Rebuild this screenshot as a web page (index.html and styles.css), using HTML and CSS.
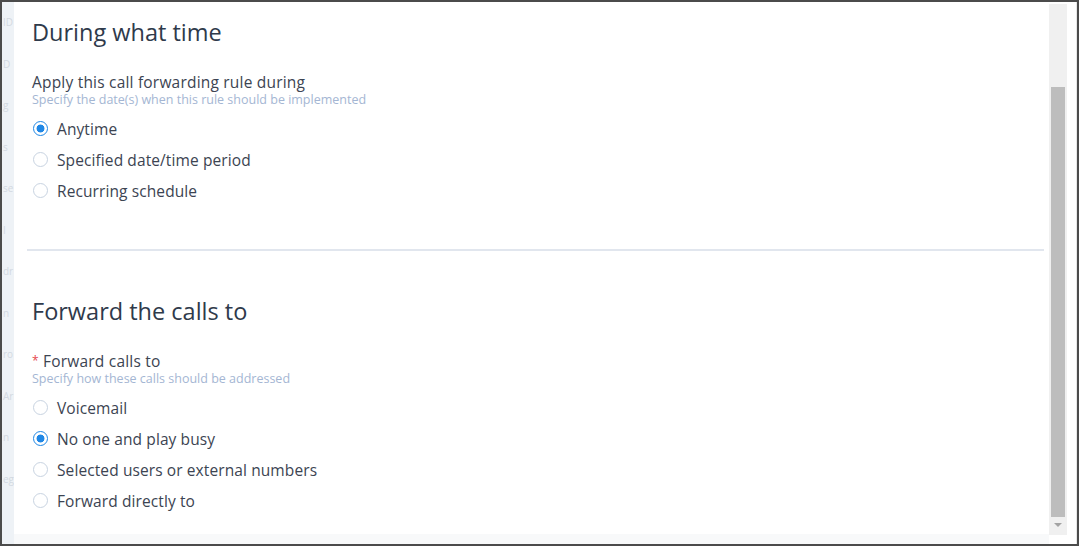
FILE: index.html
```html
<!DOCTYPE html>
<html lang="en">
<head>
    <meta charset="UTF-8">
    <meta name="viewport" content="width=device-width, initial-scale=1.0">
    <title>Call forwarding rule</title>
    <link rel="stylesheet" href="styles.css">
</head>
<body>

    <div class="frame">
        <div class="backdrop">
            <div>ID</div>
            <div>D</div>
            <div>g</div>
            <div>s</div>
            <div>se</div>
            <div>I</div>
            <div>dr</div>
            <div>n</div>
            <div>ro</div>
            <div>Ar</div>
            <div>n</div>
            <div>eg</div>
        </div>

        <div class="dialog">
            <section class="rule-section">
                <h2>During what time</h2>
                <div class="field-label">Apply this call forwarding rule during</div>
                <div class="field-hint">Specify the date(s) when this rule should be implemented</div>
                <div class="radio-group">
                    <label class="radio"><span class="dot checked"></span>Anytime</label>
                    <label class="radio"><span class="dot"></span>Specified date/time period</label>
                    <label class="radio"><span class="dot"></span>Recurring schedule</label>
                </div>
            </section>

            <hr class="divider">

            <section class="rule-section">
                <h2>Forward the calls to</h2>
                <div class="field-label"><span class="required">*</span> Forward calls to</div>
                <div class="field-hint">Specify how these calls should be addressed</div>
                <div class="radio-group">
                    <label class="radio"><span class="dot"></span>Voicemail</label>
                    <label class="radio"><span class="dot checked"></span>No one and play busy</label>
                    <label class="radio"><span class="dot"></span>Selected users or external numbers</label>
                    <label class="radio"><span class="dot"></span>Forward directly to</label>
                </div>
            </section>
        </div>

        <div class="scrollbar">
            <div class="scroll-thumb"></div>
            <div class="scroll-arrow"></div>
        </div>

        <div class="edge"></div>
    </div>

</body>
</html>
```

FILE: styles.css
```css
body {
    margin: 0;
    font-family: 'Open Sans', 'Liberation Sans', sans-serif;
    background-color: #fff;
    color: #3c4452;
}

.frame {
    width: 1079px;
    height: 546px;
    box-sizing: border-box;
    border: 2px solid #4b4b4b;
    display: flex;
    overflow: hidden;
    background-color: #fff;
}

/* page behind the dialog, only a sliver shows */
.backdrop {
    width: 12px;
    flex-shrink: 0;
    box-sizing: border-box;
    padding: 0 0 0 1px;
    background-color: #eef2f6;
    overflow: hidden;
    font-size: 10px;
    line-height: 41.5px;
    color: #d3d9e1;
    white-space: nowrap;
}

.dialog {
    flex: 1;
    padding: 14px 5px 0 18px;
    border-bottom: 10px solid #f8f9fa;
}

h2 {
    margin: 0;
    font-size: 23.5px;
    font-weight: 400;
    line-height: 32px;
    color: #2f3a4b;
}

.field-label {
    margin-top: 25px;
    font-size: 15.5px;
    letter-spacing: 0.2px;
    line-height: 18px;
    color: #3c4452;
}

.required {
    color: #e5484d;
    font-size: 12px;
    vertical-align: 2px;
}

.field-hint {
    font-size: 12.5px;
    line-height: 17px;
    color: #a4b6d3;
}

.radio-group {
    margin-top: 5px;
}

.radio {
    display: flex;
    align-items: center;
    height: 31px;
    font-size: 15.5px;
    letter-spacing: 0.1px;
    color: #3c4452;
}

.dot {
    width: 13px;
    height: 13px;
    border: 1px solid #c8d3e1;
    border-radius: 50%;
    margin: 0 9px 0 1px;
    box-sizing: content-box;
    flex-shrink: 0;
}

.dot.checked {
    border-color: #1f87e5;
    background: radial-gradient(circle, #1f87e5 0 3.6px, #fff 4.3px);
}

.divider {
    margin: 43px 0 44px -5px;
    border: none;
    height: 2px;
    background-color: #e1e6ee;
}

.scrollbar {
    width: 18px;
    flex-shrink: 0;
    margin-top: 2px;
    margin-bottom: 9px;
    background-color: #f0f0f0;
    display: flex;
    flex-direction: column;
    justify-content: flex-end;
    align-items: center;
}

.scroll-thumb {
    width: 14px;
    height: 430px;
    background-color: #bdbdbd;
}

.scroll-arrow {
    margin: 6px 0 8px;
    width: 0;
    height: 0;
    border-left: 4px solid transparent;
    border-right: 4px solid transparent;
    border-top: 4px solid #a3a3a3;
}

.edge {
    width: 9px;
    flex-shrink: 0;
    border-right: 1px solid #e6e6e6;
}
```
